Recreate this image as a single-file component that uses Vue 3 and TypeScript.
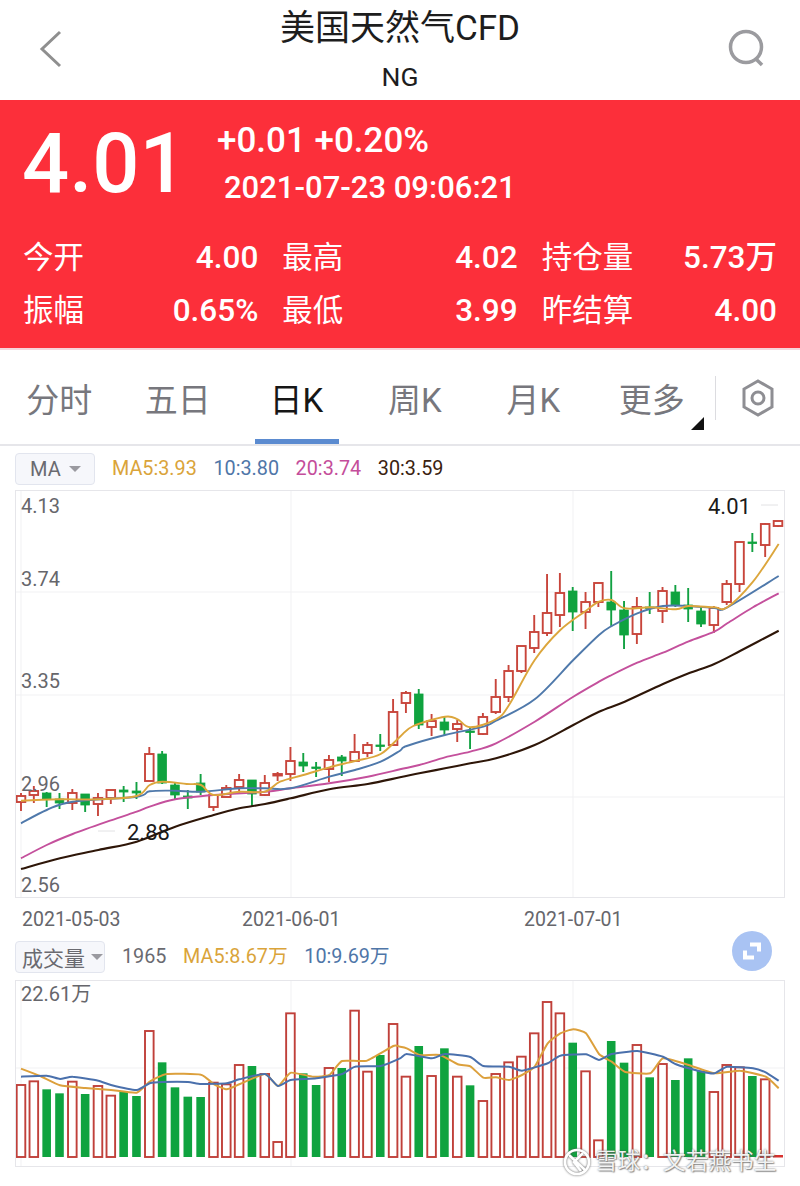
<script setup lang="ts">
type Candle = [number, number, number, number, number]
const step = (778 - 21) / 59
const cx = (i: number) => 21 + step * i

// [isUp, bodyTop, bodyBottom, wickTop, wickBottom]
const raw: Candle[] = [
  [1,796,802,793,811],[1,791,795,786,803],[0,793,799,792,807],[0,799,803,793,809],[1,793,803,789,810],
  [0,794,805,794,812],[1,798,804,793,816],[1,790,798,790,804],[0,790,792,786,802],[0,791,793,782,799],
  [1,754,781,747,781],[0,754,783,751,784],[0,785,795,782,800],[0,796,798,790,809],[0,783,792,774,795],
  [1,795,807,795,811],[1,788,797,785,797],[1,780,787,774,793],[0,780,794,780,806],[1,783,795,775,796],
  [1,774,775,772,781],[1,761,774,747,781],[0,762,766,753,772],[0,767,768,762,777],[1,760,769,755,782],
  [0,757,761,755,776],[1,752,761,734,761],[1,745,753,742,757],[0,745,746,734,751],[1,712,745,699,745],
  [1,693,703,691,713],[0,694,725,689,729],[1,721,727,714,736],[0,722,730,717,735],[1,724,729,720,742],
  [0,731,732,728,749],[1,717,734,713,735],[1,697,712,679,714],[1,671,697,665,702],[1,646,671,646,673],
  [1,632,648,615,653],[1,613,633,574,636],[1,593,615,573,627],[0,591,612,587,631],[1,602,612,592,629],
  [1,583,602,583,607],[0,602,610,571,627],[0,610,635,601,649],[1,607,634,597,644],[0,607,608,592,614],
  [1,591,611,587,623],[0,592,605,585,607],[0,605,609,588,622],[0,611,624,607,627],[1,608,625,606,633],
  [1,584,602,580,605],[1,542,584,542,592],[0,542,543,533,552],[1,524,545,523,557],[1,521,526,521,527],
]
const candles = raw.map((c, i) => ({
  x: cx(i),
  up: c[0] === 1,
  top: c[1],
  h: Math.max(c[2] - c[1], 1.5),
  wt: c[3],
  wb: c[4],
}))

const toPoints = (a: number[], b: number[], y0: number) => {
  const pts: [number, number][] = []
  for (let i = 0; i < a.length; i += 2) pts.push([a[i] / 3, y0 + a[i + 1] / 3])
  for (let i = 0; i < b.length; i += 2) pts.push([400 + b[i] / 3, y0 + b[i + 1] / 3])
  return pts
}
// Catmull-Rom through the sampled points, which gives the eased curve of the moving averages
const toPath = (a: number[], b: number[], y0: number, k = 6) => {
  const p = toPoints(a, b, y0)
  let d = `M${p[0][0].toFixed(1)} ${p[0][1].toFixed(1)}`
  for (let i = 0; i < p.length - 1; i++) {
    const p0 = p[Math.max(i - 1, 0)]
    const p1 = p[i]
    const p2 = p[i + 1]
    const p3 = p[Math.min(i + 2, p.length - 1)]
    const c1x = p1[0] + (p2[0] - p0[0]) / k
    const c1y = p1[1] + (p2[1] - p0[1]) / k
    const c2x = p2[0] - (p3[0] - p1[0]) / k
    const c2y = p2[1] - (p3[1] - p1[1]) / k
    d += `C${c1x.toFixed(1)} ${c1y.toFixed(1)} ${c2x.toFixed(1)} ${c2y.toFixed(1)} ${p2[0].toFixed(1)} ${p2[1].toFixed(1)}`
  }
  return d
}

const priceLines = [
  { color: '#2e1608', w: 2.1, d: toPath(
    [63,1167,180,1135,295,1110,410,1085,526,1040,641,1005,718,985,795,972,872,955,988,928,1103,912,1200,892],
    [58,880,135,865,211,850,288,835,404,795,520,735,597,695,674,665,789,612,866,580,943,552,1020,513,1136,452], 480) },
  { color: '#c4509c', w: 1.9, d: toPath(
    [63,1135,140,1095,218,1062,330,1022,410,995,449,980,526,958,641,945,795,935,872,925,988,910,1103,890,1200,868],
    [58,855,135,832,211,815,288,790,404,725,520,650,597,605,635,585,712,548,789,518,866,484,943,455,982,430,1059,382,1136,340], 480) },
  { color: '#4f79ab', w: 1.9, d: toPath(
    [63,1030,140,990,218,965,410,950,449,934,526,932,603,935,718,925,795,925,872,925,988,890,1065,870,1142,845,1200,812],
    [20,798,135,765,250,740,288,722,404,658,520,540,597,465,635,438,712,400,789,378,866,378,943,384,982,382,1136,288], 480) },
  { color: '#dca63c', w: 1.9, d: toPath(
    [63,962,180,958,295,958,410,948,449,915,487,905,560,912,603,915,641,945,718,935,795,935,840,905,910,885,988,862,1065,843,1142,822,1200,770],
    [40,738,135,710,173,718,211,742,288,718,327,675,404,540,481,450,558,392,597,365,635,360,674,385,751,382,828,388,866,378,943,382,982,382,1059,305,1136,192], 480) },
]

const base = 1157
const volRaw: [number, number][] = [
  [1,465],[1,454],[0,478],[0,490],[1,455],[0,492],[1,468],[1,497],[0,485],[0,498],
  [1,303],[0,397],[0,472],[0,500],[0,501],[1,458],[1,463],[1,405],[0,408],[1,432],
  [1,636],[1,250],[0,430],[0,465],[1,414],[0,414],[1,242],[1,425],[0,375],[1,282],
  [1,440],[0,348],[1,438],[0,355],[1,440],[0,466],[1,513],[1,432],[1,397],[1,380],
  [1,310],[1,216],[1,250],[0,338],[1,424],[1,631],[0,333],[0,398],[1,345],[0,442],
  [1,402],[0,450],[0,385],[0,422],[1,486],[1,405],[1,412],[0,438],[1,448],
]
const bars = volRaw.map((v, i) => {
  const top = 930 + v[1] / 3
  return { x: cx(i), up: v[0] === 1, top, h: base - top }
})

const volLines = [
  { color: '#dca03c', d: toPath(
    [63,416,120,438,180,466,256,474,333,480,410,488,449,455,500,432,603,434,641,462,680,478,720,462,795,432,834,468,872,428,940,440,988,435,1026,393,1100,392,1180,348,1200,350],
    [20,355,58,375,120,375,173,403,211,409,250,443,288,442,327,450,366,435,404,410,443,340,481,310,520,298,558,310,597,372,635,395,674,425,751,430,789,385,866,405,943,430,1020,422,1097,440,1136,475], 930, 12) },
  { color: '#4a70ac', d: toPath(
    [63,440,140,437,180,447,218,440,295,452,333,465,410,480,449,460,487,456,564,456,603,462,680,460,718,448,795,432,834,468,872,450,949,445,1026,432,1065,410,1142,408,1200,385],
    [20,372,96,385,135,372,211,381,250,408,327,410,366,422,443,400,481,377,558,373,597,390,635,372,712,363,789,380,828,403,905,425,943,430,982,410,1059,415,1097,427,1136,452], 930, 12) },
]

const tabs = ['分时', '五日', '日K', '周K', '月K', '更多']
const stats = [
  ['今开', '4.00'], ['最高', '4.02'], ['持仓量', '5.73万'],
  ['振幅', '0.65%'], ['最低', '3.99'], ['昨结算', '4.00'],
]
const maItems = [
  { t: 'MA5:3.93', c: 'orange' }, { t: '10:3.80', c: 'blue' },
  { t: '20:3.74', c: 'pink' }, { t: '30:3.59', c: 'dark' },
]
const yLabels = [
  { t: '4.13', y: 513 }, { t: '3.74', y: 586 }, { t: '3.35', y: 688 },
  { t: '2.96', y: 791 }, { t: '2.56', y: 892 },
]
const dates = ['2021-05-03', '2021-06-01', '2021-07-01']
</script>

<template>
  <div class="page">
    <header class="nav">
      <svg class="back" width="24" height="40" viewBox="0 0 24 40">
        <polyline points="21,3 3,20 21,37" />
      </svg>
      <div class="titles">
        <div class="title">美国天然气CFD</div>
        <div class="code">NG</div>
      </div>
      <svg class="search" width="40" height="40" viewBox="0 0 40 40">
        <circle cx="19" cy="18" r="15.5" />
        <line x1="29" y1="30" x2="35" y2="36" />
      </svg>
    </header>

    <section class="quote">
      <div class="quote-top">
        <div class="price">4.01</div>
        <div class="change">
          <div class="pct">+0.01 +0.20%</div>
          <div class="time">2021-07-23 09:06:21</div>
        </div>
      </div>
      <div class="stats">
        <div v-for="s in stats" :key="s[0]" class="stat">
          <span class="k">{{ s[0] }}</span><span class="v">{{ s[1] }}</span>
        </div>
      </div>
    </section>

    <nav class="tabs">
      <div v-for="t in tabs" :key="t" class="tab" :class="{ active: t === '日K' }">{{ t }}</div>
      <span class="more-mark"></span>
      <span class="tab-div"></span>
      <svg class="hex" width="36" height="40" viewBox="0 0 36 40">
        <polygon points="18,3 32,11 32,29 18,37 4,29 4,11" />
        <circle cx="18" cy="20" r="6" />
      </svg>
    </nav>

    <div class="toolbar ma-row">
      <div class="select"><span>MA</span><i class="caret"></i></div>
      <span v-for="m in maItems" :key="m.t" class="ma" :class="m.c">{{ m.t }}</span>
    </div>

    <div class="box main-box">
      <svg width="770" height="408" viewBox="15 490 770 408">
        <g class="grid">
          <line x1="15" x2="785" y1="592" y2="592" />
          <line x1="15" x2="785" y1="695" y2="695" />
          <line x1="15" x2="785" y1="797" y2="797" />
          <line x1="21" x2="21" y1="490" y2="898" />
          <line x1="291" x2="291" y1="490" y2="898" />
          <line x1="573" x2="573" y1="490" y2="898" />
        </g>
        <g v-for="(c, i) in candles" :key="i">
          <line :x1="c.x" :x2="c.x" :y1="c.wt" :y2="c.wb" :class="c.up ? 'wick-up' : 'wick-dn'" />
          <rect :x="c.x - 4.3" :y="c.top" width="8.6" :height="c.h" :class="c.up ? 'body-up' : 'body-dn'" />
        </g>
        <path v-for="l in priceLines" :key="l.color" :d="l.d" fill="none" :stroke="l.color" :stroke-width="l.w" stroke-linejoin="round" />
        <text v-for="l in yLabels" :key="l.t" x="21" :y="l.y" class="axis">{{ l.t }}</text>
        <line x1="98" x2="115" y1="831" y2="831" class="lead" />
        <text x="127" y="840" class="mark">2.88</text>
        <line x1="761" x2="778" y1="505" y2="505" class="lead" />
        <text x="708" y="514" class="mark">4.01</text>
      </svg>
    </div>

    <div class="dates">
      <span v-for="d in dates" :key="d" class="date">{{ d }}</span>
    </div>

    <div class="toolbar vol-row">
      <div class="select vol-select"><span>成交量</span><i class="caret"></i></div>
      <span class="ma gray">1965</span>
      <span class="ma orange">MA5:8.67万</span>
      <span class="ma blue">10:9.69万</span>
      <svg class="expand" width="40" height="40" viewBox="0 0 40 40">
        <circle cx="20" cy="20" r="20" />
        <path d="M18 13.5h9v7" />
        <path d="M22 26.5h-9v-7" />
      </svg>
    </div>

    <div class="box vol-box">
      <svg width="770" height="187" viewBox="15 980 770 187">
        <g class="grid">
          <line x1="15" x2="785" y1="1068" y2="1068" />
          <line x1="21" x2="21" y1="980" y2="1167" />
          <line x1="291" x2="291" y1="980" y2="1167" />
          <line x1="573" x2="573" y1="980" y2="1167" />
        </g>
        <rect v-for="(b, i) in bars" :key="i" :x="b.x - 4.3" :y="b.top" width="8.6" :height="b.h" :class="b.up ? 'bar-up' : 'bar-dn'" />
        <rect x="773" y="1155" width="10" height="2.5" fill="#d8322f" />
        <path v-for="l in volLines" :key="l.color" :d="l.d" fill="none" :stroke="l.color" stroke-width="2" stroke-linejoin="round" />
        <text x="21" y="1001" class="axis">22.61万</text>
      </svg>
      <div class="watermark">
        <svg width="28" height="28" viewBox="0 0 28 28">
          <circle cx="14" cy="14" r="12" />
          <path d="M6 7l16 15M20 5l-9 9 7 9" />
        </svg>
        <span>雪球：文若燕书生</span>
      </div>
    </div>
  </div>
</template>

<style>
html, body { margin: 0; background: #fff; }
</style>

<style scoped>
.page {
  width: 800px;
  height: 1186px;
  overflow: hidden;
  background: #fff;
  font-family: Roboto, "Noto Sans CJK SC", sans-serif;
  color: #222;
}
.nav {
  height: 100px;
  box-sizing: border-box;
  display: flex;
  align-items: flex-start;
  justify-content: space-between;
  padding: 0 33px 0 39px;
  position: relative;
}
.back { margin: 29px 10px 0 0; }
.back polyline { fill: none; stroke: #8f8f8f; stroke-width: 3; }
.search { margin-top: 29px; }
.search circle, .search line { fill: none; stroke: #9b9b9f; stroke-width: 3.5; }
.titles {
  text-align: center;
  color: #1d1d1d;
  padding-top: 6px;
}
.title { font-size: 35px; line-height: 46px; }
.code { font-size: 26.5px; line-height: 30px; margin-top: 10px; }

.quote {
  height: 250px;
  box-sizing: border-box;
  background: #fc2f3a;
  border-bottom: 2px solid #f6d5da;
  color: #fff;
  padding: 0 23px 0 23px;
}
.quote-top { display: flex; height: 128px; }
.price {
  font-size: 83px;
  font-weight: 500;
  line-height: 84px;
  padding-top: 22px;
  width: 195px;
  margin-left: -1px;
}
.change { padding-top: 21px; }
.pct { font-size: 35px; font-weight: 500; line-height: 40px; }
.time { font-size: 31px; font-weight: 500; line-height: 36px; margin: 9px 0 0 7px; }
.stats {
  display: grid;
  grid-template-columns: repeat(3, 1fr);
  column-gap: 24px;
  row-gap: 13px;
  padding-top: 10px;
}
.stat {
  display: flex;
  justify-content: space-between;
  align-items: baseline;
  font-size: 31.5px;
  line-height: 40px;
  font-weight: 500;
}
.k { font-weight: 400; font-size: 30.5px; }

.tabs {
  height: 96px;
  box-sizing: border-box;
  border-bottom: 2px solid #e6e6ea;
  display: flex;
  position: relative;
}
.tab {
  width: 118.5px;
  height: 94px;
  box-sizing: border-box;
  padding-top: 29px;
  text-align: center;
  font-size: 33px;
  line-height: 44px;
  color: #77777d;
  position: relative;
}
.tab.active { color: #161616; }
.tab.active::after {
  content: "";
  position: absolute;
  left: 18px;
  bottom: 0;
  width: 84px;
  height: 5px;
  background: #5b8bd0;
}
.more-mark {
  position: absolute;
  left: 691px;
  top: 67px;
  width: 13px;
  height: 13px;
  background: #111;
  clip-path: polygon(100% 0, 100% 100%, 0 100%);
}
.tab-div {
  width: 1px;
  height: 44px;
  background: #dcdce0;
  margin: 26px 0 0 4px;
}
.hex { margin: 28px 0 0 24px; }
.hex polygon, .hex circle { fill: none; stroke: #8e8e93; stroke-width: 3; }

.toolbar {
  display: flex;
  align-items: center;
  padding-left: 15px;
  position: relative;
}
.ma-row { height: 44px; box-sizing: border-box; padding-top: 2px; }
.vol-row { height: 39px; align-items: flex-start; }
.select {
  width: 80px;
  height: 32px;
  box-sizing: border-box;
  background: #f6f7fb;
  border: 1px solid #e2e5ee;
  border-radius: 4px;
  display: flex;
  align-items: center;
  padding-left: 14px;
  color: #6a6a70;
  font-size: 20px;
  gap: 8px;
  margin-right: 17px;
}
.vol-select { width: 90px; padding-left: 6px; font-size: 21px; gap: 6px; }
.caret {
  width: 0;
  height: 0;
  border-left: 6px solid transparent;
  border-right: 6px solid transparent;
  border-top: 6px solid #9a9aa0;
}
.ma { font-size: 19.8px; margin-right: 16.6px; line-height: 32px; white-space: nowrap; }
.orange { color: #daa43a; }
.blue { color: #4f76a8; }
.pink { color: #c44d9a; }
.dark { color: #3a2210; }
.gray { color: #6a6a70; }
.expand { position: absolute; left: 732px; top: -10px; }
.expand circle { fill: #a9c3f3; }
.expand path { fill: none; stroke: #fff; stroke-width: 4; }

.box {
  margin-left: 15px;
  width: 770px;
  box-sizing: border-box;
  outline: 1px solid #e6e6ea;
  outline-offset: -1px;
  position: relative;
}
.box > svg { display: block; }
.main-box { height: 408px; }
.vol-box { height: 187px; }
.grid line { stroke: #f1f1f3; stroke-width: 1; }
.wick-up { stroke: #c8453b; stroke-width: 1.9; }
.wick-dn { stroke: #12a142; stroke-width: 1.9; }
.body-up { fill: #fff; stroke: #c8453b; stroke-width: 1.9; }
.body-dn { fill: #0fa33f; stroke: #0fa33f; stroke-width: 0.8; }
.bar-up { fill: #fff; stroke: #c0403a; stroke-width: 1.9; }
.bar-dn { fill: #0fa33f; }
.axis { font-size: 20px; fill: #66666b; font-family: Roboto, "Noto Sans CJK SC", sans-serif; }
.mark { font-size: 22px; fill: #1a1a1a; font-family: Roboto, sans-serif; }
.lead { stroke: #e2e2e4; stroke-width: 1; }

.dates {
  height: 43px;
  display: flex;
  padding-left: 22px;
  box-sizing: border-box;
  padding-top: 9px;
  font-size: 19.5px;
  line-height: 26px;
  color: #66666b;
}
.date:nth-child(1) { width: 220px; }
.date:nth-child(2) { width: 282px; }

.watermark {
  position: absolute;
  left: 548px;
  top: 168px;
  display: flex;
  align-items: center;
  gap: 4px;
  color: rgba(255, 255, 255, 0.92);
  font-size: 22.7px;
  line-height: 28px;
  white-space: nowrap;
  text-shadow: 0 0 2px rgba(80, 80, 80, 0.9), 1px 1px 1px rgba(100, 100, 100, 0.6);
}
.watermark svg { filter: drop-shadow(0 0 1px rgba(80, 80, 80, 0.9)); }
.watermark circle, .watermark path { fill: none; stroke: #fff; stroke-width: 2.6; }
</style>
